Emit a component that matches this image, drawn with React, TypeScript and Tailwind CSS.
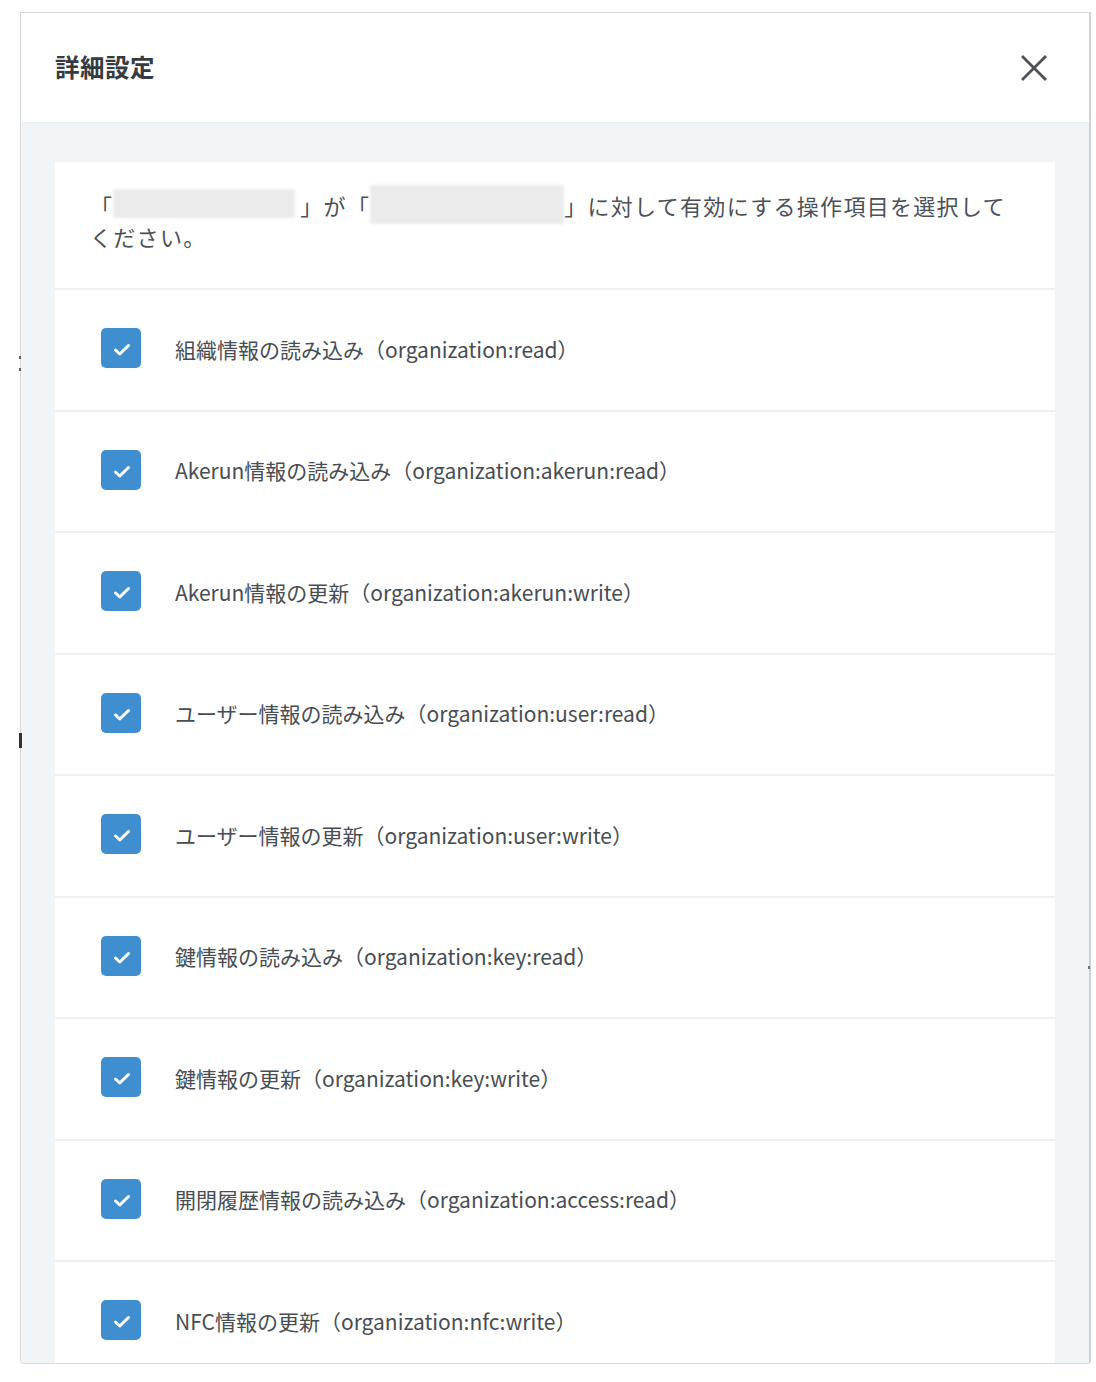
import React from "react";

const items = [
  "組織情報の読み込み（organization:read）",
  "Akerun情報の読み込み（organization:akerun:read）",
  "Akerun情報の更新（organization:akerun:write）",
  "ユーザー情報の読み込み（organization:user:read）",
  "ユーザー情報の更新（organization:user:write）",
  "鍵情報の読み込み（organization:key:read）",
  "鍵情報の更新（organization:key:write）",
  "開閉履歴情報の読み込み（organization:access:read）",
  "NFC情報の更新（organization:nfc:write）",
];

function CheckBox() {
  return (
    <div className="w-[40px] h-[40px] rounded-[5px] bg-[#3f8fd0] shrink-0 flex items-center justify-center">
      <svg width="40" height="40" viewBox="0 0 40 40">
        <path
          d="M14.5 22 L18.8 26 L27.5 17.5"
          fill="none"
          stroke="#ffffff"
          strokeWidth="3"
          strokeLinecap="round"
          strokeLinejoin="round"
        />
      </svg>
    </div>
  );
}

export default function App() {
  return (
    <div
      className="min-h-screen bg-white pt-[12px] pl-[20px] relative"
      style={{ fontFamily: '"Noto Sans CJK JP", "Noto Sans", sans-serif' }}
    >
      <div className="w-[1071px] h-[1352px] border border-[#d6dadd] border-r-2 border-r-[#cdd1d5] rounded-b-[4px] overflow-hidden flex flex-col bg-white">
        <div className="h-[109px] shrink-0 flex items-center justify-between pl-[34px] pr-[42px] bg-white shadow-[0_1px_3px_rgba(0,0,0,0.04)] relative z-10">
          <div className="text-[24.5px] font-bold text-[#353b41] tracking-[0.5px]">詳細設定</div>
          <svg width="26" height="26" viewBox="0 0 26 26">
            <path d="M2 2 L24 24 M24 2 L2 24" stroke="#4b5359" strokeWidth="2.8" strokeLinecap="square" />
          </svg>
        </div>
        <div className="flex-1 bg-[#f2f5f8] px-[34px] pt-[40px] overflow-hidden">
          <div className="bg-white">
            <div className="pl-[35px] pr-[35px] pt-[28px] pb-[36px] text-[22px] leading-[31px] tracking-[1.3px] text-[#4b5157]">
              <div className="flex items-center whitespace-nowrap h-[31px]">
                <span>「</span>
                <span className="inline-block w-[182px] h-[29px] bg-[#ebebec] blur-[1.5px] mb-[4px] rounded-[2px]" />
                <span className="inline-block w-[5px]" />
                <span>」が「</span>
                <span className="inline-block w-[194px] h-[39px] bg-[#ebebec] blur-[1.5px] mb-[2px] rounded-[2px]" />
                <span>」に対して有効にする操作項目を選択して</span>
              </div>
              <div>ください。</div>
            </div>
            {items.map((t) => (
              <div
                key={t}
                className="h-[121.5px] border-t-2 border-[#edf1f4] flex items-center pl-[46px] gap-[34px] pb-[3.5px]"
              >
                <CheckBox />
                <span className="text-[21px] text-[#474d53] whitespace-nowrap pt-[3px]">{t}</span>
              </div>
            ))}
          </div>
        </div>
      </div>
      <div className="absolute left-[19px] top-[733px] w-[3px] h-[15px] bg-[#2f3438]" />
      <div className="absolute left-[19px] top-[356px] w-[2px] h-[3px] bg-[#5a6066]" />
      <div className="absolute left-[19px] top-[368px] w-[2px] h-[3px] bg-[#5a6066]" />
      <div className="absolute left-[1088px] top-[966px] w-[2px] h-[3px] bg-[#6a7075]" />
    </div>
  );
}
